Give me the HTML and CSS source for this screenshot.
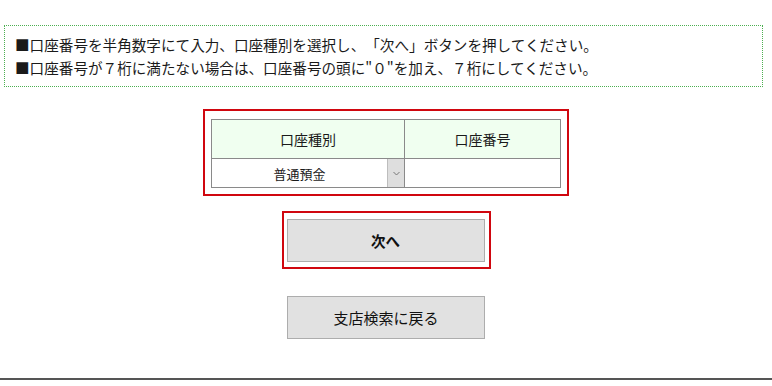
FILE: index.html
```html
<!DOCTYPE html>
<html lang="ja">
<head>
<meta charset="utf-8">
<title>口座番号入力</title>
<link rel="stylesheet" href="styles.css">
</head>
<body>
<div class="page">
  <div class="notice">
    <p>■口座番号を半角数字にて入力、口座種別を選択し、「次へ」ボタンを押してください。</p>
    <p>■口座番号が７桁に満たない場合は、口座番号の頭に"０"を加え、７桁にしてください。</p>
  </div>

  <div class="frame frame-table">
    <table class="acct">
      <tr>
        <th class="col-type">口座種別</th>
        <th class="col-num">口座番号</th>
      </tr>
      <tr>
        <td class="cell-select">
          <div class="select">
            <span class="select-text">普通預金</span>
            <span class="select-arrow">
              <svg width="7" height="5" viewBox="0 0 7 5"><path d="M0.5 1 L3.5 4 L6.5 1" fill="none" stroke="#777" stroke-width="1"/></svg>
            </span>
          </div>
        </td>
        <td class="cell-input"></td>
      </tr>
    </table>
  </div>

  <div class="frame frame-btn">
    <button class="btn btn-next">次へ</button>
  </div>

  <button class="btn btn-back">支店検索に戻る</button>

  <div class="rule"></div>
</div>
</body>
</html>
```

FILE: styles.css
```css
html, body {
  margin: 0;
  padding: 0;
  background: #fff;
}
body {
  font-family: "Noto Sans CJK JP", "Noto Sans", sans-serif;
  color: #222;
  text-spacing-trim: space-all;
}
.page {
  display: flex;
  flex-direction: column;
  align-items: center;
  padding-top: 25px;
}
.notice {
  align-self: flex-start;
  margin-left: 4px;
  width: 737px;
  height: 60px;
  border: 1px dotted #4caf50;
  padding: 0 10px;
  box-sizing: content-box;
  display: flex;
  flex-direction: column;
  justify-content: center;
}
.notice p {
  margin: 0;
  font-size: 14.6px;
  line-height: 23px;
  white-space: nowrap;
  color: #1a1a1a;
}
.frame {
  border: 2px solid #d0070f;
}
.frame-table {
  margin-top: 22px;
  padding: 8px 6px 6px 6px;
}
.acct {
  border-collapse: collapse;
  width: 350px;
  table-layout: fixed;
}
.acct th {
  background: #f0fff0;
  border: 1px solid #8a8a8a;
  height: 38px;
  padding: 0;
  font-weight: normal;
  font-size: 14px;
  color: #1a1a1a;
}
.col-type { width: 192px; }
.acct td {
  border: 1px solid #8a8a8a;
  height: 28px;
  padding: 0;
}
.select {
  display: flex;
  height: 28px;
}
.select-text {
  flex: 1;
  display: flex;
  align-items: center;
  justify-content: center;
  font-size: 13px;
  color: #1a1a1a;
}
.select-arrow {
  width: 16px;
  background: #dedede;
  border-left: 1px solid #bdbdbd;
  display: flex;
  align-items: center;
  justify-content: center;
}
.frame-btn {
  margin-top: 15px;
  padding: 6px 4px 5px 3px;
  display: flex;
}
.btn {
  width: 198px;
  height: 43px;
  background: #e1e1e1;
  border: 1px solid #adadad;
  font-family: "Noto Sans CJK JP", "Noto Sans", sans-serif;
  font-size: 14.5px;
  color: #111;
  padding: 0;
}
.btn-next {
  font-weight: bold;
}
.btn-back {
  margin-top: 27px;
  height: 43px;
  font-size: 15px;
}
.rule {
  align-self: stretch;
  margin-top: 39px;
  height: 2px;
  background: #555;
}
```
